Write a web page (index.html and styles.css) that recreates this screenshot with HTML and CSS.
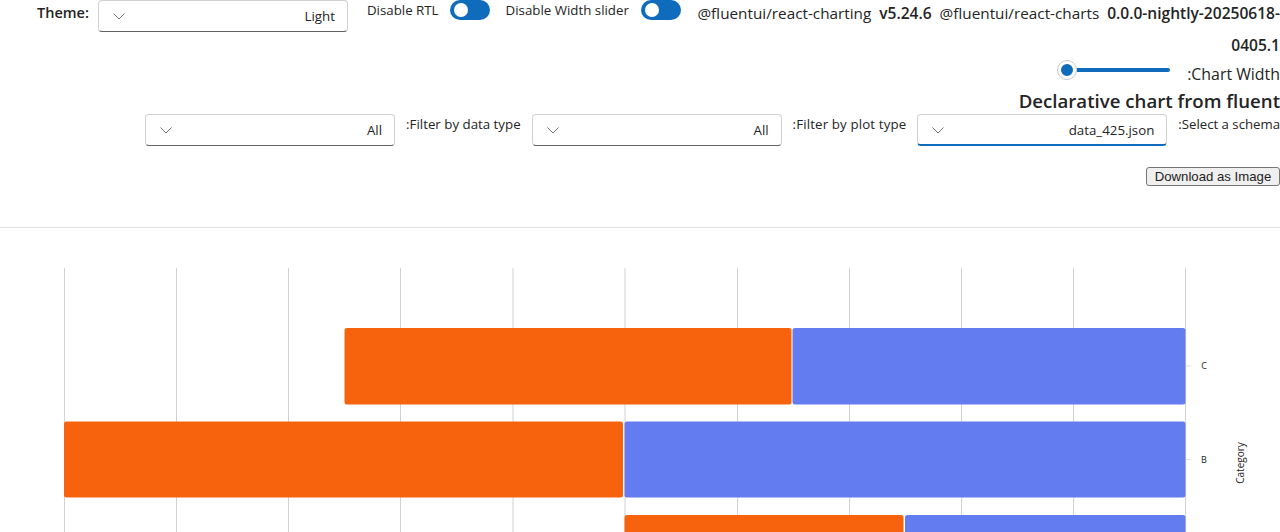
FILE: index.html
```html
<!DOCTYPE html>
<html lang="en">
<head>
  <meta charset="UTF-8">
  <title>Declarative chart</title>
  <link rel="stylesheet" href="styles.css">
</head>
<body>

  <div class="topbar">
    <label class="theme-label">Theme:</label>
    <div class="dropdown theme-dropdown" dir="rtl">
      <span>Light</span>
      <svg class="chevron" width="12" height="12" viewBox="0 0 12 12"><path d="M.5 3.5 6 9 11.5 3.5" /></svg>
    </div>
    <span class="switch-label rtl-label">Disable RTL</span>
    <span class="switch"><span class="thumb"></span></span>
    <span class="switch-label width-label">Disable Width slider</span>
    <span class="switch"><span class="thumb"></span></span>
    <div class="versions">
      @fluentui/react-charting&nbsp; <b>v5.24.6</b>&nbsp; @fluentui/react-charts&nbsp; <b>0.0.0-nightly-20250618-0405.1</b>
    </div>
  </div>

  <div class="content" dir="rtl">
    <div class="width-row">
      <label class="width-name">Chart Width:</label>
      <div class="slider"><span class="rail"></span><span class="knob"></span></div>
    </div>

    <h2>Declarative chart from fluent</h2>

    <div class="filters">
      <label class="schema-label">Select a schema:</label>
      <div class="dropdown active">
        <span>data_425.json</span>
        <svg class="chevron" width="12" height="12" viewBox="0 0 12 12"><path d="M.5 3.5 6 9 11.5 3.5" /></svg>
      </div>
      <label class="plot-label">Filter by plot type:</label>
      <div class="dropdown">
        <span>All</span>
        <svg class="chevron" width="12" height="12" viewBox="0 0 12 12"><path d="M.5 3.5 6 9 11.5 3.5" /></svg>
      </div>
      <label>Filter by data type:</label>
      <div class="dropdown">
        <span>All</span>
        <svg class="chevron" width="12" height="12" viewBox="0 0 12 12"><path d="M.5 3.5 6 9 11.5 3.5" /></svg>
      </div>
    </div>

    <div class="download-row">
      <button>Download as Image</button>
    </div>
  </div>

  <hr>

  <!-- chart -->
  <svg class="chart" width="1280" height="304" viewBox="0 228 1280 304">
    <g class="grid">
      <line x1="64.5" y1="268" x2="64.5" y2="532" />
      <line x1="176.5" y1="268" x2="176.5" y2="532" />
      <line x1="288.5" y1="268" x2="288.5" y2="532" />
      <line x1="400.5" y1="268" x2="400.5" y2="532" />
      <line x1="513" y1="268" x2="513" y2="532" />
      <line x1="625" y1="268" x2="625" y2="532" />
      <line x1="737.5" y1="268" x2="737.5" y2="532" />
      <line x1="849.5" y1="268" x2="849.5" y2="532" />
      <line x1="961.5" y1="268" x2="961.5" y2="532" />
      <line x1="1073.5" y1="268" x2="1073.5" y2="532" />
      <line x1="1185.5" y1="268" x2="1185.5" y2="532" />
    </g>
    <g class="ticks">
      <line x1="1186" y1="366" x2="1191" y2="366" />
      <line x1="1186" y1="459.5" x2="1191" y2="459.5" />
    </g>
    <rect class="bar-a" x="344.5" y="328" width="447" height="76.5" rx="2.5" />
    <rect class="bar-b" x="792.5" y="328" width="393" height="76.5" rx="2.5" />
    <rect class="bar-a" x="64" y="421.5" width="559" height="76" rx="2.5" />
    <rect class="bar-b" x="624.5" y="421.5" width="561" height="76" rx="2.5" />
    <rect class="bar-a" x="624.5" y="515" width="279" height="76" rx="2.5" />
    <rect class="bar-b" x="905" y="515" width="280.5" height="76" rx="2.5" />
    <text class="tick-label" x="1204" y="369">C</text>
    <text class="tick-label" x="1204" y="462.5">B</text>
    <text class="axis-title" transform="translate(1244 463) rotate(-90)">Category</text>
  </svg>

</body>
</html>
```
FILE: styles.css
```css
body {
  margin: 0;
  font-family: "Open Sans", "Noto Sans", sans-serif;
  font-size: 13.3px;
  color: #242424;
  background: white;
  overflow: hidden;
}
.topbar {
  display: flex;
  align-items: flex-start;
  height: 60px;
}
.theme-label {
  margin: 4px 9px 0 37px;
  font-size: 14.5px;
  font-weight: 600;
  line-height: 18px;
}
.dropdown {
  flex: none;
  box-sizing: border-box;
  display: flex;
  align-items: center;
  justify-content: space-between;
  width: 250px;
  height: 32px;
  padding: 0 12px;
  border: 1px solid #d1d1d1;
  border-bottom-color: #616161;
  border-radius: 4px;
  background: white;
}
.dropdown.active {
  border-bottom: 2px solid #0f6cbd;
}
.chevron {
  margin-left: 2px;
}
.chevron path {
  fill: none;
  stroke: #616161;
  stroke-width: 0.9;
}
.switch-label {
  line-height: 20px;
}
.rtl-label {
  margin: 0 11px 0 19px;
}
.width-label {
  margin: 0 12px 0 16px;
}
.switch {
  flex: none;
  box-sizing: border-box;
  display: flex;
  align-items: center;
  width: 40px;
  height: 20px;
  padding-left: 4px;
  border-radius: 10px;
  background: #0f6cbd;
}
.thumb {
  width: 14px;
  height: 14px;
  border-radius: 50%;
  background: white;
}
.versions {
  flex: 1;
  margin: -3px 0 0 16px;
  font-size: 15.3px;
  line-height: 32px;
  text-align: right;
}
.versions b {
  font-size: 15.55px;
  font-weight: 600;
}
.width-row {
  display: flex;
  align-items: flex-start;
  height: 30px;
}
.width-name {
  font-size: 15.9px;
  font-weight: 500;
  line-height: 28px;
}
.slider {
  position: relative;
  width: 126px;
  height: 20px;
  margin-right: 7px;
}
.rail {
  position: absolute;
  top: 8px;
  left: 8px;
  right: 10px;
  height: 4px;
  border-radius: 2px;
  background: #0f6cbd;
}
.knob {
  position: absolute;
  top: 0;
  left: 3px;
  box-sizing: border-box;
  width: 20px;
  height: 20px;
  border: 4px solid white;
  outline: 1px solid #c8c8c8;
  outline-offset: -1px;
  border-radius: 50%;
  background: #0f6cbd;
}
h2 {
  margin: -1px 0 1px;
  font-size: 18.65px;
  font-weight: 600;
  line-height: 24px;
  white-space: nowrap;
}
.filters {
  display: flex;
  align-items: flex-start;
}
.filters label {
  padding: 0 11px;
  line-height: 20px;
}
.filters .schema-label {
  padding: 0 0 0 11px;
  font-size: 13.2px;
}
.filters .plot-label {
  letter-spacing: 0.13px;
}
.download-row {
  display: flex;
  margin-top: 21px;
}
button {
  width: 134px;
  height: 19px;
  padding: 0;
  font-family: "Liberation Sans", Arial, sans-serif;
  font-size: 13.2px;
  color: #222222;
  border: 1px solid #767676;
  border-radius: 3px;
  background: #efefef;
}
hr {
  height: 1px;
  margin: 41px 0 0;
  border: none;
  background: #e0e0e0;
}
.chart {
  display: block;
}
.grid line {
  stroke: #d1d1d1;
  stroke-width: 1;
}
.ticks line {
  stroke: #e0e0e0;
  stroke-width: 1;
}
.bar-a {
  fill: #f7630c;
}
.bar-b {
  fill: #637cef;
}
.tick-label {
  font-size: 9px;
  fill: #242424;
  text-anchor: middle;
}
.axis-title {
  font-size: 10px;
  fill: #242424;
  text-anchor: middle;
}
```
